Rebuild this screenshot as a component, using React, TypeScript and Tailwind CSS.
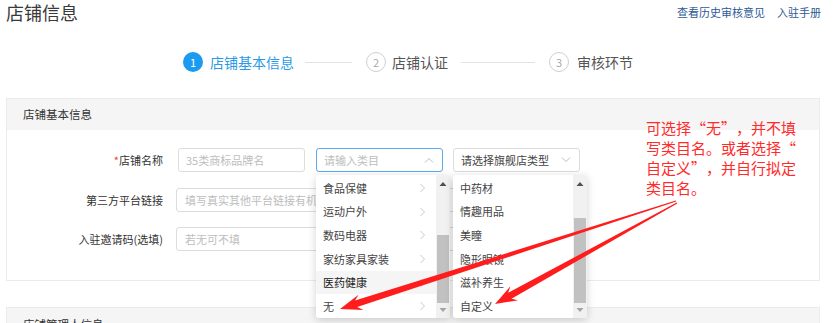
import React from "react";

const FONT = '"Noto Sans CJK SC", "Noto Sans", sans-serif';

function ChevronUp({ className = "" }: { className?: string }) {
  return (
    <svg width="10" height="6" viewBox="0 0 10 6" className={className}>
      <polyline points="1,5.5 5,1.5 9,5.5" fill="none" stroke="#bbbbbb" strokeWidth="1" />
    </svg>
  );
}
function ChevronDown({ className = "" }: { className?: string }) {
  return (
    <svg width="10" height="6" viewBox="0 0 10 6" className={className}>
      <polyline points="1,0.5 5,4.5 9,0.5" fill="none" stroke="#bbbbbb" strokeWidth="1" />
    </svg>
  );
}
function ChevronRight() {
  return (
    <svg width="6" height="10" viewBox="0 0 6 10">
      <polyline points="0.5,1 4.5,5 0.5,9" fill="none" stroke="#c8c8c8" strokeWidth="1" />
    </svg>
  );
}

function Scrollbar({ thumbTop, thumbHeight }: { thumbTop: number; thumbHeight: number }) {
  return (
    <div className="relative w-[14px] h-full bg-[#f1f1f1]">
      <svg width="14" height="14" viewBox="0 0 14 14" className="absolute left-0 top-[2px]">
        <polygon points="3.5,9 10.5,9 7,5" fill="#505050" />
      </svg>
      <div
        className="absolute left-[1px] w-[12px] bg-[#c1c1c1]"
        style={{ top: thumbTop, height: thumbHeight }}
      />
      <svg width="14" height="14" viewBox="0 0 14 14" className="absolute left-0 bottom-[1px]">
        <polygon points="3.5,5 10.5,5 7,9" fill="#a3a3a3" />
      </svg>
    </div>
  );
}

function Dropdown({
  items,
  chevrons,
  hover,
  thumbTop,
  thumbHeight,
  className,
}: {
  items: string[];
  chevrons: boolean;
  hover?: number;
  thumbTop: number;
  thumbHeight: number;
  className: string;
}) {
  return (
    <div
      className={`absolute flex h-[143px] w-[134px] bg-white rounded-[3px] shadow-[0_2px_8px_rgba(0,0,0,0.18)] overflow-hidden ${className}`}
    >
      <div className="flex-1 flex flex-col pt-[1px]">
        {items.map((t, i) => (
          <div
            key={t}
            className={`h-[24px] flex items-center justify-between pl-[7px] pr-[10px] text-[11px] ${
              hover === i ? "bg-[#f5f5f5] text-[#222]" : "text-[#444]"
            }`}
          >
            <span>{t}</span>
            {chevrons && <ChevronRight />}
          </div>
        ))}
      </div>
      <Scrollbar thumbTop={thumbTop} thumbHeight={thumbHeight} />
    </div>
  );
}

function arrowPoints(x1: number, y1: number, x2: number, y2: number) {
  const dx = x2 - x1;
  const dy = y2 - y1;
  const len = Math.hypot(dx, dy);
  const ux = dx / len;
  const uy = dy / len;
  const nx = -uy;
  const ny = ux;
  const headLen = 22;
  const headW = 8;
  const shaftEnd = 3.4;
  const shaftStart = 0.6;
  const bx = x2 - ux * headLen;
  const by = y2 - uy * headLen;
  const nbx = x2 - ux * (headLen - 5);
  const nby = y2 - uy * (headLen - 5);
  const pts = [
    [x1 + nx * shaftStart, y1 + ny * shaftStart],
    [nbx + nx * shaftEnd, nby + ny * shaftEnd],
    [bx + nx * headW, by + ny * headW],
    [x2, y2],
    [bx - nx * headW, by - ny * headW],
    [nbx - nx * shaftEnd, nby - ny * shaftEnd],
    [x1 - nx * shaftStart, y1 - ny * shaftStart],
  ];
  return pts.map((p) => `${p[0].toFixed(1)},${p[1].toFixed(1)}`).join(" ");
}

function StepCircle({ n, active }: { n: number; active?: boolean }) {
  return (
    <div
      className={`w-[20px] h-[20px] rounded-full flex items-center justify-center text-[11px] leading-none shrink-0 ${
        active ? "bg-[#1a9bf0] text-white" : "border border-[#cfcfcf] text-[#aaaaaa]"
      }`}
    >
      {n}
    </div>
  );
}

function LQ() {
  return <span className="inline-block w-[15px] text-right">“</span>;
}
function RQ() {
  return <span className="inline-block w-[15px] text-left">”</span>;
}

export default function App() {
  return (
    <div
      lang="zh-CN"
      className="relative w-[835px] h-[323px] overflow-hidden bg-white text-[#333]"
      style={{ fontFamily: FONT }}
    >
      {/* Top header */}
      <div className="flex items-center justify-between h-[24px]">
        <div className="pl-[6px] text-[18px] leading-[24px] text-[#3a3a3a]">店铺信息</div>
        <div className="flex items-center gap-[12px] pr-[14px] text-[11px] text-[#2e5a94]">
          <span>查看历史审核意见</span>
          <span>入驻手册</span>
        </div>
      </div>

      {/* Steps */}
      <div className="mt-[28px] h-[20px] flex items-center pl-[183px] text-[14px]">
        <StepCircle n={1} active />
        <div className="ml-[7px] w-[95px] text-[#2b9ae8]">店铺基本信息</div>
        <div className="w-[47px] h-px bg-[#e3e3e3]" />
        <div className="ml-[14px]">
          <StepCircle n={2} />
        </div>
        <div className="ml-[6px] w-[69px] text-[#555]">店铺认证</div>
        <div className="w-[74px] h-px bg-[#e3e3e3]" />
        <div className="ml-[14px]">
          <StepCircle n={3} />
        </div>
        <div className="ml-[8px] text-[#555]">审核环节</div>
      </div>

      {/* Card 1 */}
      <div className="mt-[26px] ml-[6px] w-[814px] border border-[#ebebeb]">
        <div className="h-[31px] bg-[#f5f5f5] flex items-center pl-[16px] text-[11.5px] text-[#333]">
          店铺基本信息
        </div>
        <div className="pt-[18px] pb-[29px] flex flex-col text-[11px]">
          {/* Row 1 */}
          <div className="flex items-center h-[24px]">
            <div className="w-[156px] text-right">
              <span className="text-[#f04040]">*</span>店铺名称
            </div>
            <div className="ml-[15px] w-[127px] h-[24px] border border-[#dcdcdc] rounded-[3px] flex items-center pl-[7px] text-[#bdbdbd]">
              35类商标品牌名
            </div>
            <div className="ml-[11px] w-[127px] h-[24px] border border-[#5aaaf0] rounded-[3px] flex items-center justify-between pl-[7px] pr-[8px] text-[#bdbdbd]">
              <span>请输入类目</span>
              <ChevronUp />
            </div>
            <div className="ml-[10px] w-[127px] h-[24px] border border-[#dcdcdc] rounded-[3px] flex items-center justify-between pl-[7px] pr-[8px] text-[#444]">
              <span>请选择旗舰店类型</span>
              <ChevronDown />
            </div>
          </div>
          {/* Row 2 */}
          <div className="flex items-center h-[24px] mt-[16px]">
            <div className="w-[156px] text-right">第三方平台链接</div>
            <div className="ml-[13px] w-[404px] h-[24px] border border-[#dcdcdc] rounded-[3px] flex items-center pl-[8px] text-[#bdbdbd] whitespace-nowrap overflow-hidden">
              填写真实其他平台链接有机会
            </div>
          </div>
          {/* Row 3 */}
          <div className="flex items-center h-[24px] mt-[15px]">
            <div className="w-[156px] text-right">入驻邀请码(选填)</div>
            <div className="ml-[13px] w-[404px] h-[24px] border border-[#dcdcdc] rounded-[3px] flex items-center pl-[8px] text-[#bdbdbd]">
              若无可不填
            </div>
          </div>
        </div>
      </div>

      {/* Card 2 */}
      <div className="mt-[26px] ml-[6px] w-[814px] border border-[#ebebeb]">
        <div className="h-[31px] bg-[#f5f5f5] flex items-start pt-[9px] pl-[16px] text-[11.5px] leading-[14px] text-[#333]">
          店铺管理人信息
        </div>
      </div>

      {/* Dropdowns */}
      <Dropdown
        className="left-[316px] top-[175px]"
        items={["食品保健", "运动户外", "数码电器", "家纺家具家装", "医药健康", "无"]}
        chevrons
        hover={4}
        thumbTop={60}
        thumbHeight={68}
      />
      <Dropdown
        className="left-[453px] top-[175px]"
        items={["中药材", "情趣用品", "美瞳", "隐形眼镜", "滋补养生", "自定义"]}
        chevrons={false}
        thumbTop={43}
        thumbHeight={85}
      />

      {/* Annotation text */}
      <div className="absolute left-[646px] top-[118px] text-[15px] leading-[20px] text-[#ff2a2a] whitespace-nowrap">
        <div>
          可选择<LQ />无<RQ />，并不填
        </div>
        <div>
          写类目名。或者选择<LQ />
        </div>
        <div>
          自定义<RQ />，并自行拟定
        </div>
        <div>类目名。</div>
      </div>

      {/* Arrows */}
      <svg className="absolute left-0 top-0" width="835" height="323" viewBox="0 0 835 323">
        <polygon points={arrowPoints(676, 201, 340, 309)} fill="#ff1c1c" />
        <polygon points={arrowPoints(677, 203, 495, 304)} fill="#ff1c1c" />
      </svg>
    </div>
  );
}
